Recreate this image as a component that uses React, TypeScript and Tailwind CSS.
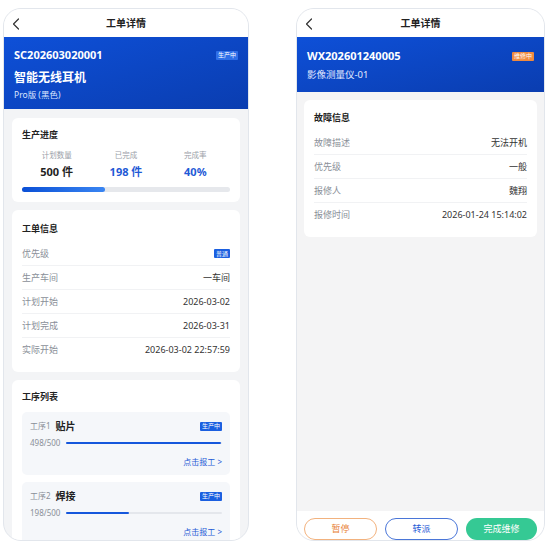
import React from 'react'

const font = { fontFamily: '"Noto Sans", "Noto Sans CJK SC", sans-serif' }

function BackIcon() {
  return (
    <svg width="8" height="12" viewBox="0 0 8 12" fill="none">
      <polyline points="6.5,1 1.5,6 6.5,11" stroke="#333" strokeWidth="1.2" strokeLinecap="round" strokeLinejoin="round" />
    </svg>
  )
}

function NavBar() {
  return (
    <div className="relative flex h-[28px] shrink-0 items-center justify-center bg-white">
      <div className="absolute left-[8px] top-[9px]">
        <BackIcon />
      </div>
      <span className="text-[10px] font-semibold text-[#222]">工单详情</span>
    </div>
  )
}

function Badge({ text, tone }: { text: string; tone: 'blue' | 'light' | 'orange' }) {
  const cls =
    tone === 'orange'
      ? 'bg-[#f08a3e] text-white'
      : tone === 'light'
        ? 'bg-[#2f6fe8] text-white'
        : 'bg-[#1b5fe0] text-white'
  return (
    <span className={`flex h-[9px] items-center rounded-[1px] px-[2px] text-[6px] leading-none ${cls}`}>
      {text}
    </span>
  )
}

function InfoRow({ label, value, last }: { label: string; value: React.ReactNode; last?: boolean }) {
  return (
    <div
      className={`flex h-[24px] items-center justify-between text-[9px] ${last ? '' : 'border-b border-[#f1f2f4]'}`}
    >
      <span className="text-[#8a8f98]">{label}</span>
      <span className="text-[#333]">{value}</span>
    </div>
  )
}

function Step({ no, name, done, pct }: { no: string; name: string; done: string; pct: number }) {
  return (
    <div className="rounded-[5px] bg-[#f5f7fa] px-[8px] pb-[7px] pt-[8px]">
      <div className="flex h-[12px] items-center justify-between">
        <div className="flex items-center gap-[5px]">
          <span className="text-[8px] text-[#8a8f98]">{no}</span>
          <span className="text-[10px] font-semibold text-[#222]">{name}</span>
        </div>
        <Badge text="生产中" tone="blue" />
      </div>
      <div className="mt-[5px] flex h-[12px] items-center gap-[6px]">
        <span className="text-[8px] text-[#8a8f98]">{done}</span>
        <div className="h-[2px] flex-1 rounded-full bg-[#e4e7ec]">
          <div className="h-full rounded-full bg-[#1557dc]" style={{ width: `${pct}%` }} />
        </div>
      </div>
      <div className="mt-[7px] flex h-[12px] items-center justify-end text-[8px] text-[#1f5ad6]">
        点击报工 &gt;
      </div>
    </div>
  )
}

function ProductionOrder() {
  return (
    <div className="flex h-[533px] w-[246px] shrink-0 flex-col overflow-hidden rounded-[18px] border border-[#e2e6ec] bg-[#f3f4f6]">
      <NavBar />
      <div className="h-[72px] shrink-0 bg-linear-to-br from-[#0e50d8] to-[#0a3db0] px-[10px] pt-[10px] text-white">
        <div className="flex h-[16px] items-center justify-between">
          <span className="text-[11px] font-bold">SC202603020001</span>
          <Badge text="生产中" tone="light" />
        </div>
        <div className="mt-[6px] text-[12px] font-bold leading-[18px]">智能无线耳机</div>
        <div className="mt-[2px] text-[8.5px] leading-[12px] text-[#dce6ff]">Pro版 (黑色)</div>
      </div>

      <div className="flex flex-col gap-[8px] px-[8px] pt-[9px]">
        <div className="rounded-[6px] bg-white px-[10px] pb-[10px] pt-[10px]">
          <div className="h-[14px] text-[9px] font-semibold leading-[14px] text-[#222]">生产进度</div>
          <div className="mt-[7px] grid grid-cols-3 text-center">
            <div>
              <div className="text-[7.5px] leading-[12px] text-[#9aa0a8]">计划数量</div>
              <div className="mt-[3px] text-[11px] font-bold leading-[16px] text-[#222]">500 件</div>
            </div>
            <div>
              <div className="text-[7.5px] leading-[12px] text-[#9aa0a8]">已完成</div>
              <div className="mt-[3px] text-[11px] font-bold leading-[16px] text-[#1f5ad6]">198 件</div>
            </div>
            <div>
              <div className="text-[7.5px] leading-[12px] text-[#9aa0a8]">完成率</div>
              <div className="mt-[3px] text-[11px] font-bold leading-[16px] text-[#1f5ad6]">40%</div>
            </div>
          </div>
          <div className="mt-[7px] h-[5px] rounded-full bg-[#e6e8ec]">
            <div className="h-full w-[40%] rounded-full bg-linear-to-r from-[#0a4fd6] to-[#3a85f2]" />
          </div>
        </div>

        <div className="rounded-[6px] bg-white px-[10px] pb-[10px] pt-[12px]">
          <div className="mb-[6px] h-[14px] text-[9px] font-semibold leading-[14px] text-[#222]">工单信息</div>
          <InfoRow label="优先级" value={<Badge text="普通" tone="blue" />} />
          <InfoRow label="生产车间" value="一车间" />
          <InfoRow label="计划开始" value="2026-03-02" />
          <InfoRow label="计划完成" value="2026-03-31" />
          <InfoRow label="实际开始" value="2026-03-02 22:57:59" last />
        </div>

        <div className="rounded-[6px] bg-white px-[10px] pb-[10px] pt-[10px]">
          <div className="mb-[8px] h-[14px] text-[9px] font-semibold leading-[14px] text-[#222]">工序列表</div>
          <div className="flex flex-col gap-[7px]">
            <Step no="工序1" name="贴片" done="498/500" pct={99.6} />
            <Step no="工序2" name="焊接" done="198/500" pct={40} />
          </div>
        </div>
      </div>
    </div>
  )
}

function RepairOrder() {
  return (
    <div className="flex h-[533px] w-[249px] shrink-0 flex-col overflow-hidden rounded-[18px] border border-[#e2e6ec] bg-[#f4f4f5]">
      <NavBar />
      <div className="h-[55px] shrink-0 bg-linear-to-br from-[#0e50d8] to-[#0a3db0] px-[10px] pt-[11px] text-white">
        <div className="flex h-[16px] items-center justify-between">
          <span className="text-[11px] font-bold">WX202601240005</span>
          <Badge text="维修中" tone="orange" />
        </div>
        <div className="mt-[4px] text-[9.5px] leading-[14px] text-[#e3eaff]">影像测量仪-01</div>
      </div>

      <div className="flex-1 px-[7px] pt-[8px]">
        <div className="rounded-[6px] bg-white px-[10px] pb-[10px] pt-[11px]">
          <div className="mb-[6px] h-[14px] text-[9px] font-semibold leading-[14px] text-[#222]">故障信息</div>
          <InfoRow label="故障描述" value="无法开机" />
          <InfoRow label="优先级" value="一般" />
          <InfoRow label="报修人" value="魏翔" />
          <InfoRow label="报修时间" value="2026-01-24 15:14:02" last />
        </div>
      </div>

      <div className="flex h-[29px] shrink-0 gap-[8px] bg-white px-[7px] pt-[7px]">
        <button className="flex h-[22px] flex-1 items-center justify-center rounded-full border border-[#f2b27e] text-[9px] text-[#e8843a]">
          暂停
        </button>
        <button className="flex h-[22px] flex-1 items-center justify-center rounded-full border border-[#4a76d8] text-[9px] text-[#1f5ad6]">
          转派
        </button>
        <button className="flex h-[22px] flex-1 items-center justify-center rounded-full bg-[#35c994] text-[9px] text-white">
          完成维修
        </button>
      </div>
    </div>
  )
}

export default function App() {
  return (
    <div className="h-[543px] w-[547px] overflow-hidden bg-white" style={font}>
      <div className="flex gap-[47px] pl-[3px] pt-[8px]">
        <ProductionOrder />
        <RepairOrder />
      </div>
    </div>
  )
}
